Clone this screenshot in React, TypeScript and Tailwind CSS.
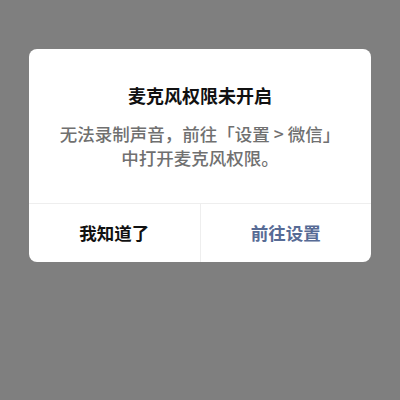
export default function App() {
  return (
    <div
      className="w-[400px] h-[400px] bg-[#7f7f7f] pt-[49px] flex flex-col items-center"
      style={{ fontFamily: '"Noto Sans CJK SC", "Noto Sans", sans-serif' }}
    >
      <div className="w-[342px] bg-white rounded-[8px] overflow-hidden">
        <div className="pt-[34px] pb-[33px] px-4 text-center">
          <h2 className="text-[18px] leading-[24px] font-bold text-[#111111]">麦克风权限未开启</h2>
          <p className="mt-[15px] text-[17.5px] leading-[24px] font-medium text-[#707070]">
            无法录制声音，前往「设置 &gt; 微信」
            <br />
            中打开麦克风权限。
          </p>
        </div>
        <div className="flex border-t border-[#eeeeee] h-[59px]">
          <button className="flex-1 text-[17.5px] font-bold text-[#111111]">我知道了</button>
          <div className="w-px bg-[#eeeeee]" />
          <button className="flex-1 text-[17.5px] font-bold text-[#576b95]">前往设置</button>
        </div>
      </div>
    </div>
  );
}
